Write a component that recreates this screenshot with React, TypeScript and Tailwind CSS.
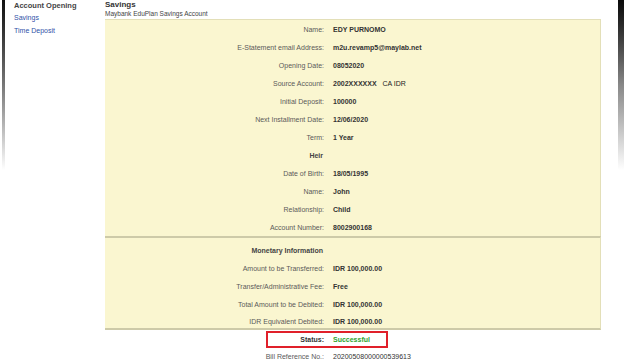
const details: [string, React.ReactNode][] = [
    ["Name:", "EDY PURNOMO"],
    ["E-Statement email Address:", "m2u.revamp5@maylab.net"],
    ["Opening Date:", "08052020"],
    ["Source Account:", <span>2002XXXXXX <span className="ml-[4px] font-normal text-[#222]">CA IDR</span></span>],
    ["Initial Deposit:", "100000"],
    ["Next Installment Date:", "12/06/2020"],
    ["Term:", "1 Year"],
]

const heir: [string, string][] = [
    ["Date of Birth:", "18/05/1995"],
    ["Name:", "John"],
    ["Relationship:", "Child"],
    ["Account Number:", "8002900168"],
]

const money: [string, string][] = [
    ["Amount to be Transferred:", "IDR 100,000.00"],
    ["Transfer/Administrative Fee:", "Free"],
    ["Total Amount to be Debited:", "IDR 100,000.00"],
]

const Row = ({ label, value, last }: { label: string, value: React.ReactNode, last?: boolean }) => (
    <div className={last ? "flex h-[15px] items-start pt-[5px]" : "flex h-[18px] items-center"}>
        <div className="w-[219px] text-right text-[#5a5a5a]">{label}</div>
        <div className="pl-[9px] font-bold text-[#333]">{value}</div>
    </div>
)

const Heading = ({ text }: { text: string }) => (
    <div className="flex h-[18px] items-center">
        <div className="w-[219px] pr-[1px] text-right font-bold text-[#444]">{text}</div>
    </div>
)

const App = () => {
    return (
        <div className="flex h-[361px] w-[624px] overflow-hidden bg-white text-[7px] leading-none" style={{ fontFamily: '"Liberation Sans", Arial, sans-serif' }}>
            <div className="ml-[2px] h-[170px] w-[3px] bg-gradient-to-b from-[#111] via-[#777] to-white" />

            <div className="w-[100px] pl-[9px] pt-[2px]">
                <div className="h-[9px] text-[7.5px] font-bold text-[#444]">Account Opening</div>
                <div className="mt-[3px] text-[#2f52a8]">Savings</div>
                <div className="mt-[6px] text-[#2f52a8]">Time Deposit</div>
            </div>

            <div className="w-[496px]">
                <div className="flex h-[10px] items-center text-[8px] font-bold text-[#333]">Savings</div>
                <div className="flex h-[9px] items-center text-[6.5px] text-[#444]">Maybank EduPlan Savings Account</div>

                <div className="border-t border-r border-[#e3dfb8] bg-[#faf6d0]">
                    {details.map(([l, v], i) => <Row key={i} label={l} value={v} />)}
                    <Heading text="Heir" />
                    {heir.map(([l, v], i) => <Row key={i} label={l} value={v} />)}
                </div>
                <div className="border-r border-t-2 border-b-2 border-[#cdcaa8] border-r-[#e3dfb8] bg-[#faf6d0] pt-[3px]">
                    <Heading text="Monetary Information" />
                    {money.map(([l, v], i) => <Row key={i} label={l} value={v} />)}
                    <Row label="IDR Equivalent Debited:" value="IDR 100,000.00" last />
                </div>

                <div className="ml-[161px] mt-[1px] flex h-[17px] w-[122px] items-center border-2 border-[#e0202a]">
                    <div className="w-[56px] text-right font-bold text-[#333]">Status:</div>
                    <div className="pl-[9px] font-bold text-[#2ea32e]">Successful</div>
                </div>
                <div className="flex h-[16px] items-center">
                    <div className="w-[219px] text-right text-[#5a5a5a]">Bill Reference No.:</div>
                    <div className="pl-[9px] text-[#333]">20200508000000539613</div>
                </div>
            </div>

            <div className="flex-1" />
            <div className="h-[170px] w-[6px] bg-gradient-to-b from-[#0a0a0a] via-[#888] to-white" />
        </div>
    )
}

export default App
